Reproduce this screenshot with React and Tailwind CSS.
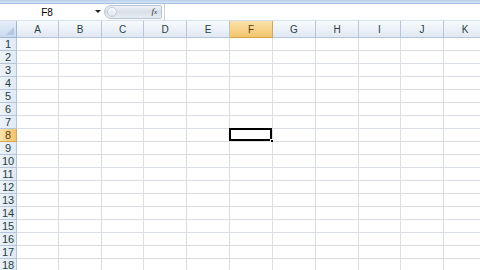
import React from "react";

const cols = ["A","B","C","D","E","F","G","H","I","J","K"];
const rows = Array.from({ length: 18 }, (_, i) => i + 1);

export default function App() {
  return (
    <div className="w-[480px] h-[270px] overflow-hidden bg-white flex flex-col" style={{ fontFamily: '"Liberation Sans", Arial, sans-serif' }}>
      {/* top ribbon strip */}
      <div className="h-[4px] shrink-0 bg-gradient-to-b from-[#b9cfea] to-[#d5e3f4] border-b border-[#a8c1e2]" />
      {/* formula bar */}
      <div className="h-[16px] shrink-0 flex items-stretch bg-white">
        <div className="w-[104px] flex items-center relative">
          <span className="flex-1 text-center text-[10px] text-black pr-[10px]">F8</span>
          <span className="absolute right-[3px] top-[6px] w-0 h-0 border-l-[3px] border-r-[3px] border-t-[3px] border-l-transparent border-r-transparent border-t-[#222]" />
        </div>
        <div className="w-[58px] my-[1px] rounded-l-[8px] rounded-r-[2px] bg-gradient-to-b from-[#eef2f8] via-[#d8dfe9] to-[#e9eef5] border border-[#b7c3d3] flex items-center justify-between pl-[2px] pr-[4px]">
          <span className="w-[10px] h-[10px] rounded-full border border-[#c4ccd8] bg-gradient-to-b from-white to-[#dde3ec] flex items-center justify-center text-[5px] text-[#9aa6b6]">◦</span>
          <span className="text-[9px] italic text-[#333]" style={{ fontFamily: '"Liberation Serif", serif' }}>f<span className="text-[7px]">x</span></span>
        </div>
        <div className="flex-1 ml-[2px] border-l border-[#c9d3df] bg-white" />
      </div>
      <div className="h-[1px] shrink-0 bg-[#d6e1ee]" />
      {/* grid */}
      <div className="grid grid-cols-[17px_42px_43px_42px_43px_43px_43px_43px_43px_42px_43px_43px] grid-rows-[17px_repeat(18,13px)] text-[10px]">
        <div className="bg-gradient-to-b from-[#e6eef9] to-[#cbdaf0] border-r border-b border-[#9eb6ce] relative">
          <span className="absolute right-[2px] bottom-[2px] w-0 h-0" style={{ borderBottom: "8px solid #b4c8e6", borderLeft: "8px solid transparent" }} />
        </div>
        {cols.map((c) => (
          <div
            key={c}
            className={
              c === "F"
                ? "flex items-center justify-center bg-gradient-to-b from-[#fbe2ab] to-[#f3c46b] border-r border-b border-[#d9a648] text-[#5a3d10]"
                : "flex items-center justify-center bg-gradient-to-b from-[#f8fafd] to-[#e1e8f3] border-r border-b border-[#b4c6dc] text-[#27413e]"
            }
          >
            {c}
          </div>
        ))}
        {rows.map((r) => (
          <React.Fragment key={r}>
            <div
              className={
                r === 8
                  ? "flex items-center justify-center text-[11px] bg-gradient-to-r from-[#fbe2ab] to-[#f3c46b] border-r border-b border-[#d9a648] text-[#5a3d10]"
                  : "flex items-center justify-center text-[11px] bg-gradient-to-r from-[#eef3fa] to-[#e1e9f5] border-r border-b border-[#b4c6dc] text-[#27413e]"
              }
            >
              {r}
            </div>
            {cols.map((c) => (
              <div key={c} className="relative border-r border-b border-[#dadfe6] bg-white">
                {r === 8 && c === "F" && (
                  <>
                    <div className="absolute -left-[1px] -top-[1px] right-0 bottom-0 border-2 border-black" />
                    <div className="absolute -right-[3px] -bottom-[3px] w-[5px] h-[5px] bg-black border border-white" />
                  </>
                )}
              </div>
            ))}
          </React.Fragment>
        ))}
      </div>
    </div>
  );
}
